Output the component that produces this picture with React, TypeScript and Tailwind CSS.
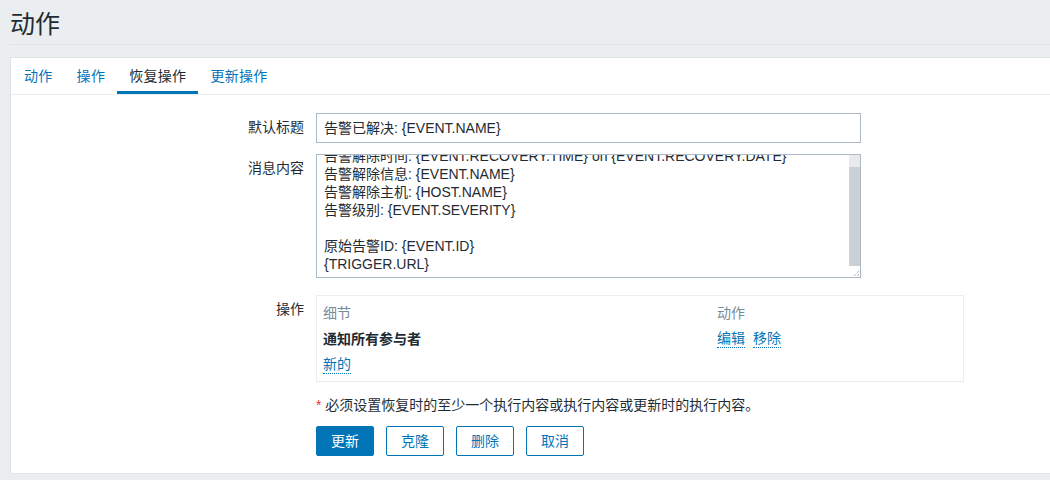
import React from 'react';

const font = { fontFamily: '"Liberation Sans", Arial, "Noto Sans CJK SC", sans-serif' };

function Row({ label, children, className = '' }: { label: string; children: React.ReactNode; className?: string }) {
  return (
    <div className={`flex ${className}`}>
      <div className="w-[306px] shrink-0 pr-[12px] pt-[5px] text-right leading-[18px] text-[#1f2c33]">{label}</div>
      <div>{children}</div>
    </div>
  );
}

function Link({ children }: { children: React.ReactNode }) {
  return <span className="inline-block leading-[17px] text-[#0275b8] border-b border-dotted border-[#0275b8]">{children}</span>;
}

export default function App() {
  const tabs = ['动作', '操作', '恢复操作', '更新操作'];
  const active = 2;

  return (
    <div className="min-h-[480px] bg-[#ebeef0] text-[14px] text-[#1f2c33]" style={font}>
      {/* page header */}
      <div className="ml-[10px] h-[45px] border-b border-[#dfe4e7] pt-[8px]">
        <h1 className="text-[25px] leading-[32px] font-normal text-[#1f2c33]">动作</h1>
      </div>

      <div className="mt-[12px] ml-[10px] h-[417px] bg-white border-l border-t border-b border-[#dfe4e7]">
        {/* tabs */}
        <div className="flex h-[37px] border-b border-[#ebeef0] pl-[1px]">
          {tabs.map((t, i) => (
            <div
              key={t}
              className={`px-[12px] h-[36px] leading-[36px] tracking-[0.3px] ${
                i === active ? 'text-[#1f2c33] border-b-[3px] border-[#0275b8]' : 'text-[#0275b8]'
              }`}
            >
              {t}
            </div>
          ))}
        </div>

        <div className="pt-[18px] -ml-[1px]">
          <Row label="默认标题">
            <div className="w-[545px] h-[30px] border border-[#acbbc2] px-[7px] leading-[28px]">告警已解决: {'{EVENT.NAME}'}</div>
          </Row>

          <Row label="消息内容" className="mt-[11px]">
            <div className="w-[545px] h-[124px] border border-[#acbbc2] flex">
              <div className="flex-1 overflow-hidden pl-[7px] leading-[18px]">
                <div className="-mt-[8px] whitespace-pre">
                  {[
                    '告警解除时间: {EVENT.RECOVERY.TIME} on {EVENT.RECOVERY.DATE}',
                    '告警解除信息: {EVENT.NAME}',
                    '告警解除主机: {HOST.NAME}',
                    '告警级别: {EVENT.SEVERITY}',
                    ' ',
                    '原始告警ID: {EVENT.ID}',
                    '{TRIGGER.URL}',
                  ].map((l, i) => (
                    <div key={i} className="h-[18px]">{l}</div>
                  ))}
                </div>
              </div>
              <div className="w-[11px] flex flex-col">
                <div className="h-[12px] bg-[#e8eaec]" />
                <div className="flex-1 bg-[#c9d1d7]" />
                <div className="h-[11px] bg-white flex items-end justify-end">
                  <svg width="8" height="8" viewBox="0 0 8 8">
                    <path d="M7 2 L2 7 M7 5 L5 7" stroke="#8a9399" strokeWidth="1" strokeDasharray="1 1" />
                  </svg>
                </div>
              </div>
            </div>
          </Row>

          <Row label="操作" className="mt-[17px]">
            <div className="w-[648px] border border-[#ebeef0] pt-[4px] pb-[3px] px-[6px]">
              <div className="flex h-[26px] leading-[26px] text-[#768d99]">
                <div className="w-[394px]">细节</div>
                <div>动作</div>
              </div>
              <div className="flex h-[26px] leading-[26px]">
                <div className="w-[394px] font-bold">通知所有参与者</div>
                <div className="flex gap-[8px] items-center">
                  <Link>编辑</Link>
                  <Link>移除</Link>
                </div>
              </div>
              <div className="flex h-[26px] items-center">
                <Link>新的</Link>
              </div>
            </div>
          </Row>

          <div className="ml-[306px] mt-[14px] leading-[18px]">
            <span className="text-[#e33734]">*</span> 必须设置恢复时的至少一个执行内容或执行内容或更新时的执行内容。
          </div>

          <div className="ml-[306px] mt-[12px] flex gap-[12px]">
            <button className="h-[30px] px-[14px] rounded-[2px] bg-[#0275b8] border border-[#0275b8] text-white">更新</button>
            {['克隆', '删除', '取消'].map((b) => (
              <button key={b} className="h-[30px] px-[14px] rounded-[2px] bg-white border border-[#0275b8] text-[#0275b8]">
                {b}
              </button>
            ))}
          </div>
        </div>
      </div>
    </div>
  );
}
